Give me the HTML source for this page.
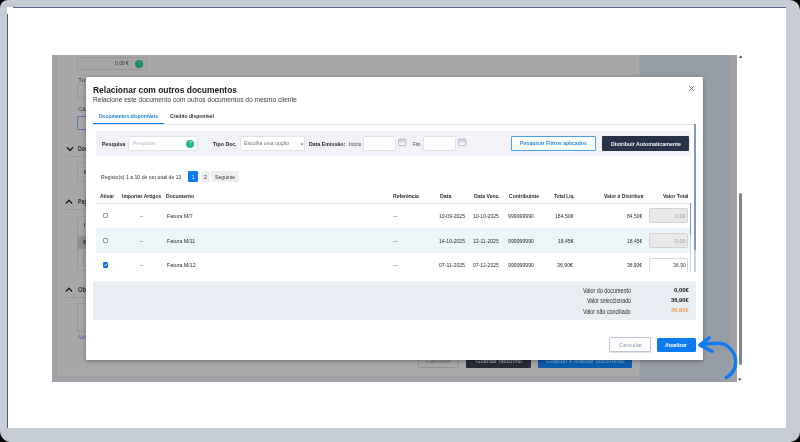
<!DOCTYPE html>
<html><head><meta charset="utf-8"><title>Relacionar com outros documentos</title>
<style>
html,body{margin:0;padding:0;background:#000;}
body{width:800px;height:442px;position:relative;overflow:hidden;font-family:"Liberation Sans",sans-serif;}
div,span,svg{position:absolute;box-sizing:border-box;}
.t{white-space:nowrap;transform-origin:0 50%;}
.gl{left:0;top:0;width:800px;height:442px;will-change:transform;}
#frame{left:0;top:0;width:800px;height:442px;background:#c5ccd6;border-radius:8px 10px 10px 11px;}
#paper{left:7px;top:7px;width:779px;height:420.6px;background:#fff;}
.nv{background:#566789;}
/* background app page (already darkened by overlay) */
#page{left:52px;top:54.5px;width:685.4px;height:327.1px;background:#9f9fa5;overflow:hidden;}
#card{left:6.2px;top:-2px;width:581.3px;height:323.3px;background:#a7a7a7;border:1px solid #acacac;}
#side{left:587.5px;top:0;width:90.5px;height:327.2px;background:#969da6;}
#gut{left:678px;top:0;width:7.4px;height:327.2px;background:#a09fa4;}
.bx{border:1px solid #9499a1;background:#a6a6a6;border-radius:1px;}
.ln{height:1px;background:#999;}
/* modal */
#modal{left:85.8px;top:76.8px;width:617.3px;height:283px;background:#fff;border-radius:1.5px;box-shadow:0 1px 4px rgba(0,0,0,.36);}
.in{background:#fff;border:1px solid #dfe3ea;border-radius:1.5px;}
.dis{background:#e9e9e9;border:1px solid #d2d2d2;border-radius:1.5px;}
.cb{width:5.4px;height:5.4px;border:1px solid #9b9b9b;border-radius:1px;background:#fff;}
</style></head><body>
<div id="frame"></div>
<div id="paper"></div>
<div class="nv" style="left:12.5px;top:7px;width:773.5px;height:1px;"></div>
<div class="nv" style="left:7px;top:13.5px;width:1px;height:414px;background:#4a5c80;"></div>

<div id="page">
  <div id="card"></div>
  <div id="side"></div>
  <div id="gut"></div>
</div>
<!-- background widgets (absolute to body) -->
<div class="bx" style="left:77.3px;top:56.9px;width:69.5px;height:13.5px;"></div>
<div style="left:135px;top:59.6px;width:8px;height:8px;border-radius:50%;background:#178a63;"></div>
<div class="bx" style="left:77.3px;top:83.8px;width:40px;height:14.5px;"></div>
<div class="bx" style="left:77.3px;top:116.3px;width:40px;height:14.2px;border-color:#5877ad;"></div>
<div class="ln" style="left:65.5px;top:156.2px;width:60px;"></div>
<div class="bx" style="left:77.3px;top:162.2px;width:40px;height:20.3px;"></div>
<div class="ln" style="left:65.5px;top:209px;width:60px;"></div>
<div class="bx" style="left:77.3px;top:215.5px;width:40px;height:55.5px;"></div>
<div style="left:77.8px;top:235.6px;width:20px;height:13.3px;background:#8e8e95;"></div>
<div class="bx" style="left:83.4px;top:253.4px;width:30px;height:12.5px;"></div>
<div class="ln" style="left:65.5px;top:297px;width:60px;"></div>
<div class="bx" style="left:77.3px;top:303.3px;width:40px;height:29.2px;"></div>
<svg style="left:65.8px;top:144.8px;width:8px;height:8px;" viewBox="0 0 8 8"><path d="M0.9 2.3 L4 5.5 L7.1 2.3" fill="none" stroke="#1b1b1b" stroke-width="1.3"/></svg>
<svg style="left:64.8px;top:197.8px;width:8px;height:8px;" viewBox="0 0 8 8"><path d="M0.9 5.5 L4 2.3 L7.1 5.5" fill="none" stroke="#1b1b1b" stroke-width="1.3"/></svg>
<svg style="left:64.8px;top:285.6px;width:8px;height:8px;" viewBox="0 0 8 8"><path d="M0.9 5.5 L4 2.3 L7.1 5.5" fill="none" stroke="#1b1b1b" stroke-width="1.3"/></svg>
<!-- background footer buttons -->
<div style="left:417.9px;top:353px;width:41px;height:15.3px;border:1px solid #8e939b;border-radius:1.5px;background:#a7a7a7;"></div>
<div style="left:466px;top:353px;width:64.6px;height:15.3px;border-radius:1.5px;background:#272b35;"></div>
<div style="left:537.5px;top:353px;width:94.2px;height:15.3px;border-radius:1.5px;background:#0b5cad;"></div>
<div class="gl">
<span class="t" id="b0" style="left:114.8px;top:60.12px;font-size:5.8px;line-height:6.96px;font-weight:400;color:#2e2e2e;transform:scaleX(0.8558);">0,00 €</span>
<span class="t" id="b1" style="left:77.6px;top:77.14px;font-size:5.6px;line-height:6.72px;font-weight:400;color:#3a3a3a;transform:scaleX(1.2174);">Total</span>
<span class="t" id="b2" style="left:77.6px;top:105.64px;font-size:5.6px;line-height:6.72px;font-weight:400;color:#3a3a3a;transform:scaleX(1.0580);">Câmbio</span>
<span class="t" id="b3" style="left:77.6px;top:144.96px;font-size:6.4px;line-height:7.68px;font-weight:700;color:#2c2c2c;transform:scaleX(0.8113);">Documentos</span>
<span class="t" id="b4" style="left:77.6px;top:198.06px;font-size:6.4px;line-height:7.68px;font-weight:700;color:#2c2c2c;transform:scaleX(0.8243);">Pagamento</span>
<span class="t" id="b5" style="left:77.6px;top:285.96px;font-size:6.4px;line-height:7.68px;font-weight:700;color:#2c2c2c;transform:scaleX(0.9065);">Observações</span>
<span class="t" id="b6" style="left:77.6px;top:334.30px;font-size:5.0px;line-height:6.00px;font-weight:400;color:#4a6096;transform:scaleX(1.0036);"><i>Nota</i></span>
<span class="t" id="b7" style="left:137.6px;top:60.34px;font-size:5.6px;line-height:6.72px;font-weight:700;color:#5aa98c;transform:scaleX(0.8183);">?</span>
<span class="t" id="b8" style="left:83.6px;top:168.92px;font-size:5.8px;line-height:6.96px;font-weight:700;color:#333;transform:scaleX(0.8258);">P</span>
<span class="t" id="b9" style="left:83.6px;top:222.02px;font-size:5.8px;line-height:6.96px;font-weight:700;color:#333;transform:scaleX(0.8615);">I</span>
<span class="t" id="b10" style="left:83.4px;top:239.12px;font-size:5.8px;line-height:6.96px;font-weight:700;color:#333;transform:scaleX(0.8258);">M</span>
<span class="t" id="b11" style="left:426px;top:357.48px;font-size:6.2px;line-height:7.44px;font-weight:400;color:#6c7179;transform:scaleX(1.0095);">Cancelar</span>
<span class="t" id="b12" style="left:475.5px;top:357.48px;font-size:6.2px;line-height:7.44px;font-weight:400;color:#bdbdbd;transform:scaleX(0.9223);">Guardar rascunho</span>
<span class="t" id="b13" style="left:545.5px;top:357.48px;font-size:6.2px;line-height:7.44px;font-weight:400;color:#8fb9e2;transform:scaleX(0.9431);">Guardar e finalizar documento</span>
</div>

<!-- page scrollbar -->
<div style="left:738.8px;top:193px;width:2.8px;height:172px;background:#858585;border-radius:1.4px;"></div>
<svg style="left:737.5px;top:54px;width:6px;height:5px;" viewBox="0 0 6 5"><path d="M1 3.8 L2.7 1.4 L4.4 3.8 Z" fill="#333"/></svg>
<svg style="left:737.2px;top:376.6px;width:6px;height:5px;" viewBox="0 0 6 5"><path d="M1 1.4 L2.7 3.8 L4.4 1.4 Z" fill="#333"/></svg>

<!-- modal -->
<div id="modal"></div>
<!-- close x -->
<svg style="left:688px;top:85px;width:7px;height:7px;" viewBox="0 0 7 7"><path d="M1 1 L6 6 M6 1 L1 6" stroke="#6079a6" stroke-width="0.9" fill="none"/></svg>
<!-- tabs lines -->
<div style="left:93px;top:124px;width:602.3px;height:1px;background:#e3e6ee;"></div>
<div style="left:93px;top:122.6px;width:71.3px;height:1.6px;background:#0d7cf2;"></div>
<!-- outer vertical scrollbar of tab content -->
<div style="left:694.4px;top:124.4px;width:1.2px;height:147.4px;background:#c4cfe2;"></div>
<div style="left:694.4px;top:124.4px;width:1.2px;height:126px;background:#7f96bd;"></div>
<!-- filter bar -->
<div style="left:95.5px;top:131.1px;width:595.7px;height:24.6px;background:#f1f3f8;"></div>
<div class="in" style="left:128.2px;top:136.3px;width:69.4px;height:14.3px;"></div>
<div style="left:186px;top:139.6px;width:8px;height:8px;border-radius:50%;background:#1fb782;"></div>
<div class="in" style="left:240px;top:136.3px;width:65px;height:14.3px;"></div>
<svg style="left:299.6px;top:142.8px;width:4px;height:3px;" viewBox="0 0 4 3"><path d="M0.6 0.6 L2 2.4 L3.4 0.6 Z" fill="#6b6b6b"/></svg>
<div class="in" style="left:363.2px;top:136.3px;width:32.4px;height:14.3px;"></div>
<div class="in" style="left:423.2px;top:136.3px;width:32.6px;height:14.3px;"></div>
<svg style="left:398.2px;top:138.4px;width:8.4px;height:8.4px;" viewBox="0 0 9 9"><rect x="0.6" y="1.4" width="7.8" height="6.8" rx="0.9" fill="none" stroke="#a4a9b3" stroke-width="0.8"/><path d="M0.6 3.3 H8.4 M2.6 0.5 V2 M6.4 0.5 V2" stroke="#a4a9b3" stroke-width="0.8" fill="none"/></svg>
<svg style="left:458.4px;top:138.4px;width:8.4px;height:8.4px;" viewBox="0 0 9 9"><rect x="0.6" y="1.4" width="7.8" height="6.8" rx="0.9" fill="none" stroke="#a4a9b3" stroke-width="0.8"/><path d="M0.6 3.3 H8.4 M2.6 0.5 V2 M6.4 0.5 V2" stroke="#a4a9b3" stroke-width="0.8" fill="none"/></svg>
<div style="left:510.8px;top:136.3px;width:85.2px;height:14.3px;background:#fff;border:1px solid #4ea2dc;border-radius:1px;"></div>
<div style="left:601.5px;top:136.3px;width:87.7px;height:14.3px;background:#283248;border-radius:1px;"></div>
<!-- pagination -->
<div style="left:188px;top:170.5px;width:10.3px;height:11.8px;background:#0d7cf2;border-radius:1px;"></div>
<div style="left:200.5px;top:170.5px;width:9px;height:11.8px;background:#eeeeee;border-radius:1px;"></div>
<div style="left:211.3px;top:170.5px;width:27.7px;height:11.8px;background:#eeeeee;border-radius:1px;"></div>
<!-- table -->
<div style="left:95.5px;top:203px;width:594.4px;height:1px;background:#e4e6ea;"></div>
<div style="left:95.5px;top:228.1px;width:594.4px;height:24.7px;background:#ecf6f8;"></div>
<div class="cb" style="left:103px;top:213.1px;"></div>
<div class="cb" style="left:103px;top:237.8px;"></div>
<div class="cb" style="left:103px;top:262.4px;background:#0b6fe0;border-color:#0b6fe0;"></div>
<svg style="left:103px;top:262.4px;width:5.4px;height:5.4px;" viewBox="0 0 5.4 5.4"><path d="M1.2 2.8 L2.3 3.9 L4.3 1.6" fill="none" stroke="#fff" stroke-width="0.9"/></svg>
<div class="dis" style="left:649.3px;top:208.3px;width:38.4px;height:14.4px;"></div>
<div class="dis" style="left:649.3px;top:233.2px;width:38.4px;height:14.4px;"></div>
<div class="in" style="left:649.3px;top:258.2px;width:38.4px;height:13.6px;border-bottom:none;border-color:#d4d8e0;border-radius:1.5px 1.5px 0 0;"></div>
<!-- table inner scrollbar -->
<div style="left:690px;top:203px;width:1.2px;height:68.8px;background:#c4cfe2;"></div>
<div style="left:690px;top:203px;width:1.2px;height:32px;background:#7f96bd;"></div>
<!-- summary -->
<div style="left:93px;top:280.7px;width:602.6px;height:39.4px;background:#e9eef5;border-radius:1px;"></div>
<!-- footer buttons -->
<div style="left:609.3px;top:337.4px;width:41.7px;height:14.9px;background:#fff;border:1px solid #bcc6d6;border-radius:1.5px;box-shadow:0 0.5px 1px rgba(120,130,150,.25);"></div>
<div style="left:656.8px;top:337.6px;width:39.2px;height:14.6px;background:#0d7cf2;border-radius:1.5px;"></div>
<div class="gl">
<span class="t" id="t0" style="left:93px;top:84.00px;font-size:9.5px;line-height:11.40px;font-weight:700;color:#161616;transform:scaleX(0.8885);">Relacionar com outros documentos</span>
<span class="t" id="t1" style="left:93px;top:95.96px;font-size:6.9px;line-height:8.28px;font-weight:400;color:#3a3a3a;transform:scaleX(0.9579);">Relacione este documento com outros documentos do mesmo cliente</span>
<span class="t" id="t2" style="left:99px;top:111.64px;font-size:6.1px;line-height:7.32px;font-weight:700;color:#1a7ed6;transform:scaleX(0.8180);">Documentos disponíveis</span>
<span class="t" id="t3" style="left:170px;top:111.64px;font-size:6.1px;line-height:7.32px;font-weight:700;color:#2f2f2f;transform:scaleX(0.8237);">Crédito disponível</span>
<span class="t" id="t4" style="left:101.8px;top:139.88px;font-size:6.2px;line-height:7.44px;font-weight:700;color:#1e1e1e;transform:scaleX(0.8538);">Pesquisa</span>
<span class="t" id="t5" style="left:133px;top:139.96px;font-size:5.9px;line-height:7.08px;font-weight:400;color:#b4b9c6;transform:scaleX(0.8587);">Pesquisar</span>
<span class="t" id="t6" style="left:213.3px;top:139.88px;font-size:6.2px;line-height:7.44px;font-weight:700;color:#1e1e1e;transform:scaleX(0.8441);">Tipo Doc.</span>
<span class="t" id="t7" style="left:243.6px;top:140.30px;font-size:6.0px;line-height:7.20px;font-weight:400;color:#6b6e75;transform:scaleX(0.8538);">Escolha uma opção</span>
<span class="t" id="t8" style="left:308.8px;top:139.88px;font-size:6.2px;line-height:7.44px;font-weight:700;color:#1e1e1e;transform:scaleX(0.8486);">Data Emissão:</span>
<span class="t" id="t9" style="left:348.8px;top:140.04px;font-size:6.1px;line-height:7.32px;font-weight:400;color:#3c3c3c;transform:scaleX(0.8574);">Início</span>
<span class="t" id="t10" style="left:413px;top:140.04px;font-size:6.1px;line-height:7.32px;font-weight:400;color:#3c3c3c;transform:scaleX(0.7385);">Fim</span>
<span class="t" id="t11" style="left:520px;top:140.00px;font-size:6.0px;line-height:7.20px;font-weight:700;color:#2a86d2;transform:scaleX(0.8561);">Pesquisar Filtros aplicados</span>
<span class="t" id="t12" style="left:610.5px;top:139.84px;font-size:6.1px;line-height:7.32px;font-weight:700;color:#f4f6fa;transform:scaleX(0.8784);">Distribuir Automaticamente</span>
<span class="t" id="t13" style="left:188.6px;top:140.14px;font-size:5.6px;line-height:6.72px;font-weight:700;color:#8fe3c0;transform:scaleX(0.8183);">?</span>
<span class="t" id="t14" style="left:100.8px;top:173.48px;font-size:6.2px;line-height:7.44px;font-weight:400;color:#333;transform:scaleX(0.8328);">Registo(s) 1 a 10 de um total de 13</span>
<span class="t" id="t15" style="left:192px;top:172.98px;font-size:6.2px;line-height:7.44px;font-weight:400;color:#ffffff;transform:scaleX(0.7240);">1</span>
<span class="t" id="t16" style="left:203.6px;top:172.98px;font-size:6.2px;line-height:7.44px;font-weight:400;color:#3a3a3a;transform:scaleX(0.8688);">2</span>
<span class="t" id="t17" style="left:215px;top:173.60px;font-size:6.0px;line-height:7.20px;font-weight:400;color:#3a3a3a;transform:scaleX(0.8443);">Seguinte</span>
<span class="t" id="t18" style="left:100.3px;top:192.82px;font-size:5.8px;line-height:6.96px;font-weight:700;color:#2a2a2a;transform:scaleX(0.8639);">Ativar</span>
<span class="t" id="t19" style="left:122px;top:192.82px;font-size:5.8px;line-height:6.96px;font-weight:700;color:#2a2a2a;transform:scaleX(0.8694);">Importar Artigos</span>
<span class="t" id="t20" style="left:166.3px;top:192.82px;font-size:5.8px;line-height:6.96px;font-weight:700;color:#2a2a2a;transform:scaleX(0.8780);">Documento</span>
<span class="t" id="t21" style="left:393px;top:192.82px;font-size:5.8px;line-height:6.96px;font-weight:700;color:#2a2a2a;transform:scaleX(0.8700);">Referência</span>
<span class="t" id="t22" style="left:439.5px;top:192.82px;font-size:5.8px;line-height:6.96px;font-weight:700;color:#2a2a2a;transform:scaleX(0.9143);">Data</span>
<span class="t" id="t23" style="left:474px;top:192.82px;font-size:5.8px;line-height:6.96px;font-weight:700;color:#2a2a2a;transform:scaleX(0.8865);">Data Venc.</span>
<span class="t" id="t24" style="left:508.5px;top:192.82px;font-size:5.8px;line-height:6.96px;font-weight:700;color:#2a2a2a;transform:scaleX(0.8707);">Contribuinte</span>
<span class="t" id="t25" style="left:554.3px;top:192.82px;font-size:5.8px;line-height:6.96px;font-weight:700;color:#2a2a2a;transform:scaleX(0.8168);">Total Liq.</span>
<span class="t" id="t26" style="left:604.3px;top:192.82px;font-size:5.8px;line-height:6.96px;font-weight:700;color:#2a2a2a;transform:scaleX(0.8622);">Valor a Distribuir</span>
<span class="t" id="t27" style="left:662.5px;top:192.82px;font-size:5.8px;line-height:6.96px;font-weight:700;color:#2a2a2a;transform:scaleX(0.8727);">Valor Total</span>
<span class="t" id="t28" style="left:140px;top:212.82px;font-size:5.8px;line-height:6.96px;font-weight:400;color:#555;transform:scaleX(0.8258);">--</span>
<span class="t" id="t29" style="left:166.8px;top:212.82px;font-size:5.8px;line-height:6.96px;font-weight:400;color:#2c2c2c;transform:scaleX(0.9168);">Fatura M/7</span>
<span class="t" id="t30" style="left:392.5px;top:212.82px;font-size:5.8px;line-height:6.96px;font-weight:400;color:#555;transform:scaleX(0.7418);">---</span>
<span class="t" id="t31" style="left:438.5px;top:212.82px;font-size:5.8px;line-height:6.96px;font-weight:400;color:#2c2c2c;transform:scaleX(0.8767);">10-09-2025</span>
<span class="t" id="t32" style="left:473px;top:212.82px;font-size:5.8px;line-height:6.96px;font-weight:400;color:#2c2c2c;transform:scaleX(0.8700);">10-10-2025</span>
<span class="t" id="t33" style="left:507.5px;top:212.82px;font-size:5.8px;line-height:6.96px;font-weight:400;color:#2c2c2c;transform:scaleX(0.8961);">999999990</span>
<span class="t" id="t34" style="left:554.8px;top:212.82px;font-size:5.8px;line-height:6.96px;font-weight:400;color:#2c2c2c;transform:scaleX(0.8823);">184,50€</span>
<span class="t" id="t35" style="left:626.8px;top:212.82px;font-size:5.8px;line-height:6.96px;font-weight:400;color:#2c2c2c;transform:scaleX(0.8571);">84,50€</span>
<span class="t" id="t36" style="left:674.8px;top:212.82px;font-size:5.8px;line-height:6.96px;font-weight:400;color:#9a9a9a;transform:scaleX(0.9383);">0,00</span>
<span class="t" id="t37" style="left:140px;top:237.52px;font-size:5.8px;line-height:6.96px;font-weight:400;color:#555;transform:scaleX(0.8258);">--</span>
<span class="t" id="t38" style="left:166.8px;top:237.52px;font-size:5.8px;line-height:6.96px;font-weight:400;color:#2c2c2c;transform:scaleX(0.9147);">Fatura M/11</span>
<span class="t" id="t39" style="left:392.5px;top:237.52px;font-size:5.8px;line-height:6.96px;font-weight:400;color:#555;transform:scaleX(0.7418);">---</span>
<span class="t" id="t40" style="left:438.5px;top:237.52px;font-size:5.8px;line-height:6.96px;font-weight:400;color:#2c2c2c;transform:scaleX(0.8767);">14-10-2025</span>
<span class="t" id="t41" style="left:473px;top:237.52px;font-size:5.8px;line-height:6.96px;font-weight:400;color:#2c2c2c;transform:scaleX(0.8825);">13-11-2025</span>
<span class="t" id="t42" style="left:507.5px;top:237.52px;font-size:5.8px;line-height:6.96px;font-weight:400;color:#2c2c2c;transform:scaleX(0.8961);">999999990</span>
<span class="t" id="t43" style="left:557.8px;top:237.52px;font-size:5.8px;line-height:6.96px;font-weight:400;color:#2c2c2c;transform:scaleX(0.8740);">18,45€</span>
<span class="t" id="t44" style="left:626.8px;top:237.52px;font-size:5.8px;line-height:6.96px;font-weight:400;color:#2c2c2c;transform:scaleX(0.8571);">18,45€</span>
<span class="t" id="t45" style="left:674.8px;top:237.52px;font-size:5.8px;line-height:6.96px;font-weight:400;color:#9a9a9a;transform:scaleX(0.9383);">0,00</span>
<span class="t" id="t46" style="left:140px;top:262.22px;font-size:5.8px;line-height:6.96px;font-weight:400;color:#555;transform:scaleX(0.8258);">--</span>
<span class="t" id="t47" style="left:166.8px;top:262.22px;font-size:5.8px;line-height:6.96px;font-weight:400;color:#2c2c2c;transform:scaleX(0.9179);">Fatura M/12</span>
<span class="t" id="t48" style="left:392.5px;top:262.22px;font-size:5.8px;line-height:6.96px;font-weight:400;color:#555;transform:scaleX(0.7418);">---</span>
<span class="t" id="t49" style="left:438.5px;top:262.22px;font-size:5.8px;line-height:6.96px;font-weight:400;color:#2c2c2c;transform:scaleX(0.8894);">07-11-2025</span>
<span class="t" id="t50" style="left:473px;top:262.22px;font-size:5.8px;line-height:6.96px;font-weight:400;color:#2c2c2c;transform:scaleX(0.8700);">07-12-2025</span>
<span class="t" id="t51" style="left:507.5px;top:262.22px;font-size:5.8px;line-height:6.96px;font-weight:400;color:#2c2c2c;transform:scaleX(0.8961);">999999990</span>
<span class="t" id="t52" style="left:557.3px;top:262.22px;font-size:5.8px;line-height:6.96px;font-weight:400;color:#2c2c2c;transform:scaleX(0.9022);">36,90€</span>
<span class="t" id="t53" style="left:627px;top:262.22px;font-size:5.8px;line-height:6.96px;font-weight:400;color:#2c2c2c;transform:scaleX(0.8458);">36,90€</span>
<span class="t" id="t54" style="left:672.5px;top:262.22px;font-size:5.8px;line-height:6.96px;font-weight:400;color:#444;transform:scaleX(0.8887);">36,90</span>
<span class="t" id="t55" style="left:582.9px;top:286.96px;font-size:6.4px;line-height:7.68px;font-weight:400;color:#2c2c2c;transform:scaleX(0.8478);">Valor do documento</span>
<span class="t" id="t56" style="left:587px;top:297.26px;font-size:6.4px;line-height:7.68px;font-weight:400;color:#2c2c2c;transform:scaleX(0.8219);">Valor seleccionado</span>
<span class="t" id="t57" style="left:583.4px;top:307.56px;font-size:6.4px;line-height:7.68px;font-weight:400;color:#2c2c2c;transform:scaleX(0.8337);">Valor não conciliado</span>
<span class="t" id="t58" style="left:673.6px;top:286.60px;font-size:6.0px;line-height:7.20px;font-weight:700;color:#161616;transform:scaleX(0.9923);">0,00€</span>
<span class="t" id="t59" style="left:670.9px;top:296.90px;font-size:6.0px;line-height:7.20px;font-weight:700;color:#161616;transform:scaleX(0.9586);">36,90€</span>
<span class="t" id="t60" style="left:670.9px;top:307.30px;font-size:6.0px;line-height:7.20px;font-weight:700;color:#f09b50;transform:scaleX(0.9586);">36,90€</span>
<span class="t" id="t61" style="left:618.7px;top:341.08px;font-size:6.2px;line-height:7.44px;font-weight:400;color:#8c96a8;transform:scaleX(0.9327);">Cancelar</span>
<span class="t" id="t62" style="left:665.4px;top:341.08px;font-size:6.2px;line-height:7.44px;font-weight:700;color:#ffffff;transform:scaleX(0.8340);">Atualizar</span>
</div>

<!-- blue hand-drawn arrow -->
<svg style="left:690.6px;top:330px;width:60px;height:56px;" viewBox="0 0 60 56"><g fill="none" stroke="#0d7cf2" stroke-width="3.4" stroke-linecap="round" stroke-linejoin="round"><path d="M9.2 15 C14 13.9 21 13.3 27.4 13.3 C37.4 13.3 44.7 23 44.7 31.8 C44.7 39 41 44.5 35.4 47.6"/><path d="M18.2 7.9 L8.9 14.9 L21.2 21.5"/></g></svg>
</body></html>
